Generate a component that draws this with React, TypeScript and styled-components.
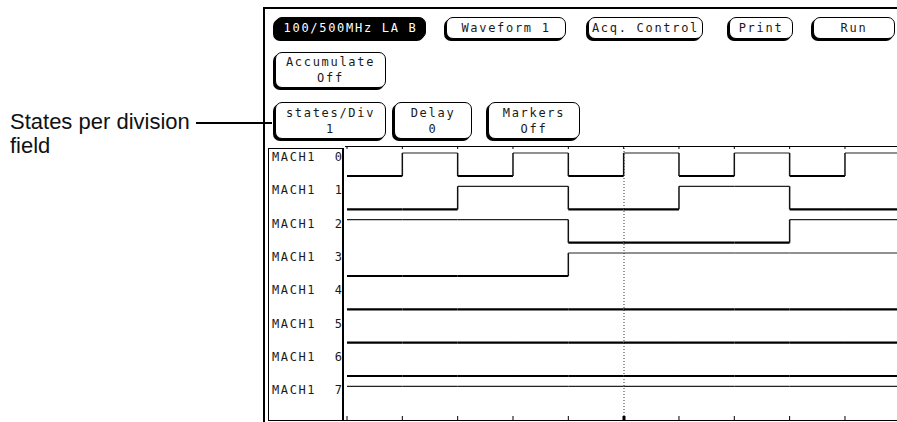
import React from 'react';
import styled, { createGlobalStyle } from 'styled-components';

const GlobalStyle = createGlobalStyle`
  html, body {
    margin: 0;
    padding: 0;
    background: #fff;
  }
  body {
    width: 897px;
    height: 422px;
    overflow: hidden;
  }
`;

const Page = styled.div`
  display: flex;
  width: 897px;
  height: 422px;
  background: #fff;
`;

const Callout = styled.div`
  width: 263px;
  flex-shrink: 0;
  box-sizing: border-box;
  padding-top: 110px;
  display: flex;
  align-items: flex-start;
  position: relative;
  z-index: 1;
`;

const CalloutText = styled.div`
  padding-left: 10px;
  font-family: 'Liberation Sans', Arial, sans-serif;
  font-size: 22px;
  line-height: 24px;
  color: #111;
  white-space: nowrap;
`;

const Leader = styled.div`
  flex: 1;
  height: 2px;
  margin: 12px -9px 0 6px;
  background: #000;
`;

const Screen = styled.div`
  flex: 1;
  min-width: 0;
  margin-top: 7px;
  border-left: 2px solid #000;
  border-top: 2px solid #000;
  display: flex;
  flex-direction: column;
`;

const KeyRow = styled.div<{ $top: number }>`
  display: flex;
  align-items: flex-start;
  padding-left: 10px;
  margin-top: ${(p) => p.$top}px;
`;

const Key = styled.div<{ $w: number; $h: number; $gap?: number; $dark?: boolean }>`
  box-sizing: border-box;
  flex-shrink: 0;
  width: ${(p) => p.$w}px;
  height: ${(p) => p.$h}px;
  margin-left: ${(p) => p.$gap ?? 0}px;
  border: 1px solid #000;
  border-radius: 7px;
  box-shadow: -2px 2px 0 0 #000;
  background: ${(p) => (p.$dark ? '#000' : '#fff')};
  color: ${(p) => (p.$dark ? '#fff' : '#1a1a1a')};
  display: flex;
  flex-direction: column;
  align-items: center;
  justify-content: center;
  font-family: 'DejaVu Sans Mono', monospace;
  font-size: 12px;
  line-height: 16px;
  letter-spacing: 1.7px;
  white-space: pre;
`;

const Display = styled.div`
  display: flex;
  align-items: flex-start;
  margin: 7px 0 0 3px;
  height: 276px;
`;

const Labels = styled.div`
  box-sizing: border-box;
  width: 76px;
  height: 273px;
  margin-top: 2px;
  padding-top: 1px;
  border: 1px solid #000;
  border-right-width: 2px;
  display: grid;
  grid-auto-rows: 33.333px;
  align-content: start;
`;

const LabelRow = styled.div`
  display: flex;
  justify-content: space-between;
  padding: 0 0 0 3px;
  font-family: 'DejaVu Sans Mono', monospace;
  font-size: 12px;
  line-height: 14px;
  color: #1a1a1a;
`;

const LabelName = styled.span`
  letter-spacing: 1.6px;
`;

const Waves = styled.svg`
  display: block;
  flex-shrink: 0;
`;

const X0 = 347;
const STEP = 55.33;
const END = 897;
const ticks = Array.from({ length: 10 }, (_, i) => X0 + STEP * i);

function level(ch: number, i: number): boolean {
  if (ch === 7) return true;
  return (((i + 4) >> ch) & 1) === 1;
}

function Channel({ ch }: { ch: number }) {
  const hi = 153 + 33.33 * ch;
  const lo = 176 + 33.33 * ch;
  const segs: JSX.Element[] = [];
  for (let i = 0; i < 10; i++) {
    const a = ticks[i];
    const b = i < 9 ? ticks[i + 1] : END;
    const on = level(ch, i);
    segs.push(
      <line
        key={'h' + i}
        x1={a}
        x2={b}
        y1={on ? hi : lo}
        y2={on ? hi : lo}
        stroke={on ? '#222' : '#000'}
        strokeWidth={on ? 1.2 : 2.2}
      />
    );
    if (i > 0 && level(ch, i - 1) !== on) {
      segs.push(<line key={'v' + i} x1={a} x2={a} y1={hi} y2={lo} stroke="#111" strokeWidth={1.5} />);
    }
  }
  return <g>{segs}</g>;
}

function WaveArea() {
  return (
    <Waves width={553} height={276} viewBox="344 146 553 276">
      <line x1={345} x2={897} y1={146.5} y2={146.5} stroke="#000" strokeWidth={1} />
      {ticks.map((x) => (
        <line key={'t' + x} x1={x} x2={x} y1={146} y2={149} stroke="#000" strokeWidth={1} />
      ))}
      <line x1={624} x2={624} y1={148} y2={418} stroke="#333" strokeWidth={1} strokeDasharray="1 2" />
      {Array.from({ length: 8 }, (_, ch) => (
        <Channel key={ch} ch={ch} />
      ))}
      <line x1={344} x2={897} y1={420.5} y2={420.5} stroke="#000" strokeWidth={1} />
      {ticks.map((x) => (
        <line key={'b' + x} x1={x} x2={x} y1={416} y2={420} stroke="#000" strokeWidth={1} />
      ))}
      <rect x={622.5} y={416} width={3} height={4} fill="#000" />
    </Waves>
  );
}

export default function App() {
  return (
    <Page>
      <GlobalStyle />
      <Callout>
        <CalloutText>
          States per division
          <br />
          field
        </CalloutText>
        <Leader />
      </Callout>
      <Screen>
        <KeyRow $top={8}>
          <Key $w={151} $h={22} $dark>
            100/500MHz LA B
          </Key>
          <Key $w={120} $h={22} $gap={20}>
            Waveform 1
          </Key>
          <Key $w={115} $h={22} $gap={22}>
            Acq. Control
          </Key>
          <Key $w={64} $h={22} $gap={26}>
            Print
          </Key>
          <Key $w={82} $h={22} $gap={20}>
            Run
          </Key>
        </KeyRow>
        <KeyRow $top={13}>
          <Key $w={111} $h={36}>
            <span>Accumulate</span>
            <span>Off</span>
          </Key>
        </KeyRow>
        <KeyRow $top={14}>
          <Key $w={111} $h={37}>
            <span>states/Div</span>
            <span>1</span>
          </Key>
          <Key $w={78} $h={37} $gap={8}>
            <span>Delay</span>
            <span>0</span>
          </Key>
          <Key $w={92} $h={37} $gap={16}>
            <span>Markers</span>
            <span>Off</span>
          </Key>
        </KeyRow>
        <Display>
          <Labels>
            {Array.from({ length: 8 }, (_, i) => (
              <LabelRow key={i}>
                <LabelName>MACH1</LabelName>
                <span>{i}</span>
              </LabelRow>
            ))}
          </Labels>
          <WaveArea />
        </Display>
      </Screen>
    </Page>
  );
}
